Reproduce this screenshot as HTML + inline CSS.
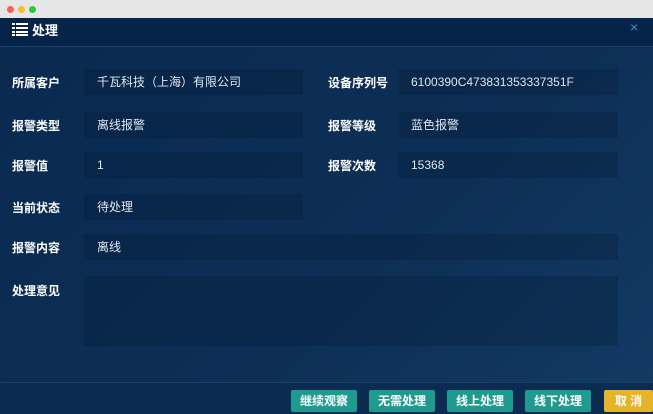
<!DOCTYPE html><html><head><meta charset="utf-8"><style>
*{margin:0;padding:0;box-sizing:border-box}
body{width:653px;height:414px;overflow:hidden;background:#0c2b50;font-family:"Liberation Sans","Noto Sans CJK SC",sans-serif;position:relative}
.tb{position:absolute;left:0;top:0;width:653px;height:18px;background:#e6e6e6}
.d{position:absolute;top:6px;width:7px;height:7px;border-radius:50%}
.hd{position:absolute;top:18px;left:0;width:653px;height:29px;background:#06244a;border-bottom:1px solid #1d4166}
.hd span{position:absolute;left:32px;top:2px;color:#fff;font-size:13px;font-weight:bold}
.bg{position:absolute;left:0;top:48px;width:653px;height:334px;background:linear-gradient(135deg,#0a2a50 0%,#0d2f56 60%,#123a62 100%)}
.l{position:absolute;color:#fff;font-size:12px;font-weight:bold}
.f{position:absolute;height:26px;background:rgba(5,25,50,0.28);color:#dfe6ee;font-size:12px;line-height:26px;padding-left:13px}
.btn{position:absolute;top:390px;height:22px;background:#1e9a8e;color:#fff;font-size:12px;font-weight:bold;text-align:center;line-height:22px;border-radius:2px}
</style></head><body>
<div class="tb"><div class="d" style="left:7px;background:#fc5f57"></div><div class="d" style="left:18px;background:#fdbc2e"></div><div class="d" style="left:29px;background:#29c840"></div></div>
<div class="bg"></div>
<div class="hd"><svg style="position:absolute;left:12px;top:5px" width="16" height="13"><g fill="#fff"><rect x="0" y="0" width="3" height="2"/><rect x="4" y="0" width="12" height="2"/><rect x="0" y="4" width="3" height="2"/><rect x="4" y="4" width="12" height="2"/><rect x="0" y="8" width="3" height="2"/><rect x="4" y="8" width="12" height="2"/><rect x="0" y="11" width="3" height="2"/><rect x="4" y="11" width="12" height="2"/></g></svg><span>处理</span><span style="left:630px;top:1px;color:#3b8fd0;font-weight:normal;font-size:14px">×</span></div>
<div class="l" style="left:12px;top:74px">所属客户</div><div class="f" style="left:84px;top:69px;width:219px">千瓦科技（上海）有限公司</div>
<div class="l" style="left:328px;top:74px">设备序列号</div><div class="f" style="left:398px;top:69px;width:220px">6100390C473831353337351F</div>
<div class="l" style="left:12px;top:117px">报警类型</div><div class="f" style="left:84px;top:112px;width:219px">离线报警</div>
<div class="l" style="left:328px;top:117px">报警等级</div><div class="f" style="left:398px;top:112px;width:220px">蓝色报警</div>
<div class="l" style="left:12px;top:157px">报警值</div><div class="f" style="left:84px;top:152px;width:219px">1</div>
<div class="l" style="left:328px;top:157px">报警次数</div><div class="f" style="left:398px;top:152px;width:220px">15368</div>
<div class="l" style="left:12px;top:199px">当前状态</div><div class="f" style="left:84px;top:194px;width:219px">待处理</div>
<div class="l" style="left:12px;top:239px">报警内容</div><div class="f" style="left:84px;top:234px;width:534px">离线</div>
<div class="l" style="left:12px;top:282px">处理意见</div><div class="f" style="left:84px;top:276px;width:534px;height:70px"></div>
<div style="position:absolute;left:0;top:382px;width:653px;height:32px;background:#0c2b50;border-top:1px solid #1d4166"></div>
<div class="btn" style="left:291px;width:66px">继续观察</div>
<div class="btn" style="left:369px;width:66px">无需处理</div>
<div class="btn" style="left:447px;width:66px">线上处理</div>
<div class="btn" style="left:525px;width:66px">线下处理</div>
<div class="btn" style="left:604px;width:49px;background:#e6b42a">取 消</div>
</body></html>
